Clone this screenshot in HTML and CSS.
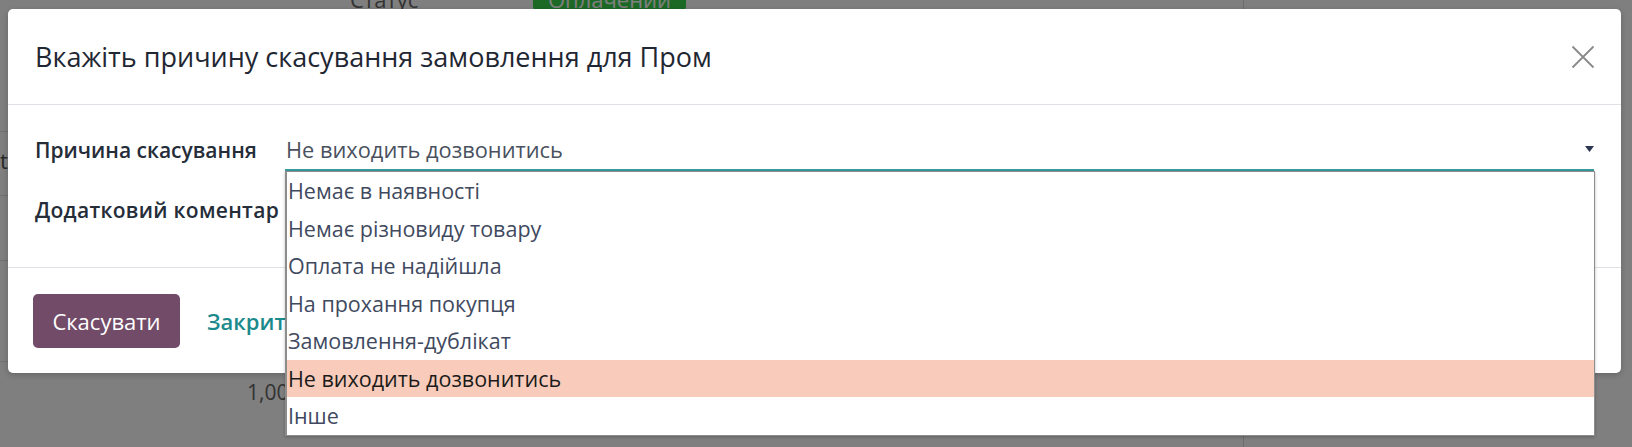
FILE: index.html
```html
<!DOCTYPE html>
<html lang="uk">
<head>
<meta charset="utf-8">
<title>Скасування замовлення</title>
<link rel="stylesheet" href="styles.css">
</head>
<body>
<div class="page">
  <div class="main">
    <div class="status-row">
      <span class="status-label">Статус</span>
      <span class="badge">Оплачений</span>
    </div>
    <div class="bg-row r1"></div>
    <div class="bg-row r2"><span class="cut">t</span></div>
    <div class="bg-row r3"></div>
    <div class="bg-row r4"></div>
    <div class="bg-row r5"><span class="qty">1,00</span></div>
  </div>
  <div class="side"></div>

  <div class="backdrop"></div>

  <div class="modal">
    <div class="modal-header">
      <h4 class="modal-title">Вкажіть причину скасування замовлення для Пром</h4>
      <button class="close" aria-label="Закрити">
        <svg width="24" height="24" viewBox="0 0 24 24"><path d="M1.5 1.5 L22.5 22.5 M22.5 1.5 L1.5 22.5" stroke="#8a8a8a" stroke-width="1.8" fill="none"/></svg>
      </button>
    </div>
    <div class="modal-body">
      <div class="form-row">
        <label class="form-label">Причина скасування</label>
        <div class="select">
          <span class="select-value">Не виходить дозвонитись</span>
          <svg class="caret" width="9" height="6" viewBox="0 0 9 6"><path d="M0 0 H9 L4.5 6 Z" fill="#2b3650"/></svg>
          <ul class="options">
            <li>Немає в наявності</li>
            <li>Немає різновиду товару</li>
            <li>Оплата не надійшла</li>
            <li>На прохання покупця</li>
            <li>Замовлення-дублікат</li>
            <li class="selected">Не виходить дозвонитись</li>
            <li>Інше</li>
          </ul>
        </div>
      </div>
      <div class="form-row">
        <label class="form-label label-wide">Додатковий коментар</label>
        <div class="textarea"></div>
      </div>
    </div>
    <div class="modal-footer">
      <button class="btn btn-primary">Скасувати</button>
      <button class="btn btn-link">Закрити</button>
    </div>
  </div>
</div>
</body>
</html>
```

FILE: styles.css
```css
* { box-sizing: border-box; }
html, body { margin: 0; padding: 0; }
body {
  font-family: "Open Sans", "Noto Sans", sans-serif;
  background: #fff;
}
.page {
  position: relative;
  width: 1632px;
  height: 447px;
  overflow: hidden;
  display: grid;
  grid-template-columns: 1244px 1fr;
  background: #fff;
}
.main {
  border-right: 1px solid #d8d8d8;
  display: flex;
  flex-direction: column;
}
.status-row {
  display: flex;
  align-items: flex-start;
  height: 20px;
  margin-top: -16px;
  padding-left: 350px;
}
.status-label {
  width: 183px;
  font-size: 22px;
  line-height: 30px;
  color: #666;
}
.badge {
  width: 153px;
  height: 30px;
  border-radius: 8px;
  background: #38d24b;
  color: #fff;
  font-size: 22px;
  line-height: 30px;
  text-align: center;
}
.bg-row {
  border-bottom: 1px solid #e2e2e2;
  flex: none;
}
.r1 { height: 128px; }
.r2 { height: 64px; padding-top: 16px; }
.r3 { height: 65px; }
.r4 { height: 101px; }
.r5 { flex: 1; border-bottom: 0; padding: 16px 0 0 247px; }
.cut { display: block; margin-left: 0; font-size: 22px; color: #555; line-height: 24px; }
.qty { font-size: 21px; color: #666; }

.backdrop {
  position: absolute;
  inset: 0;
  background: rgba(0, 0, 0, 0.5);
}

.modal {
  position: absolute;
  left: 8px;
  top: 9px;
  width: 1613px;
  background: #fff;
  border-radius: 5px;
  box-shadow: 0 2px 6px rgba(0, 0, 0, 0.2);
}
.modal-header {
  display: flex;
  align-items: center;
  justify-content: space-between;
  height: 96px;
  padding: 0 26px 0 27px;
  border-bottom: 1px solid #dee2e6;
}
.modal-title {
  margin: 0;
  font-size: 27px;
  font-weight: 400;
  line-height: 39px;
  color: #1f2733;
}
.close {
  border: 0;
  background: none;
  padding: 0;
  width: 24px;
  height: 24px;
  display: flex;
  cursor: pointer;
}
.modal-body {
  padding: 26px 27px 36px 27px;
  display: flex;
  flex-direction: column;
  gap: 20px;
}
.form-row {
  display: flex;
  align-items: flex-start;
  height: 40px;
}
.form-label {
  width: 250px;
  flex: none;
  padding-top: 4px;
  font-size: 21px;
  font-weight: 600;
  line-height: 30px;
  color: #252d39;
  white-space: nowrap;
}
.label-wide { letter-spacing: 0.3px; }
.select {
  position: relative;
  flex: 1;
  height: 40px;
  padding: 4px 0 4px 1px;
  border-bottom: 2px solid #3a9b9d;
  display: flex;
  align-items: center;
  justify-content: space-between;
}
.select-value {
  font-size: 21.8px;
  line-height: 30px;
  color: #4a515e;
}
.caret { margin-right: 0; margin-top: -2px; }
.options {
  position: absolute;
  left: 0;
  top: calc(100% + 2px);
  width: 1310px;
  margin: 0;
  padding: 0;
  list-style: none;
  background: #fff;
  border: 1px solid #8d8d8d;
  border-left-width: 2px;
  box-shadow: 0 1px 3px rgba(0, 0, 0, 0.25);
  z-index: 2;
}
.options li {
  height: 37.5px;
  line-height: 37.5px;
  padding-left: 1px;
  font-size: 21.5px;
  color: #3f4a60;
}
.options li.selected {
  background: #f8cbba;
  color: #1b1b1b;
}
.textarea { flex: 1; height: 40px; }

.modal-footer {
  display: flex;
  align-items: center;
  gap: 9px;
  padding: 26px 25px 25px 25px;
  border-top: 1px solid #dee2e6;
}
.btn {
  height: 54px;
  padding: 0 18px;
  border: 0;
  border-radius: 5px;
  font-family: inherit;
  font-size: 22px;
  font-weight: 500;
  cursor: pointer;
}
.btn-primary {
  width: 147px;
  padding: 0;
  background: #714b67;
  color: #fff;
}
.btn-link {
  background: none;
  color: #1b8a8c;
  font-weight: 600;
}
```
